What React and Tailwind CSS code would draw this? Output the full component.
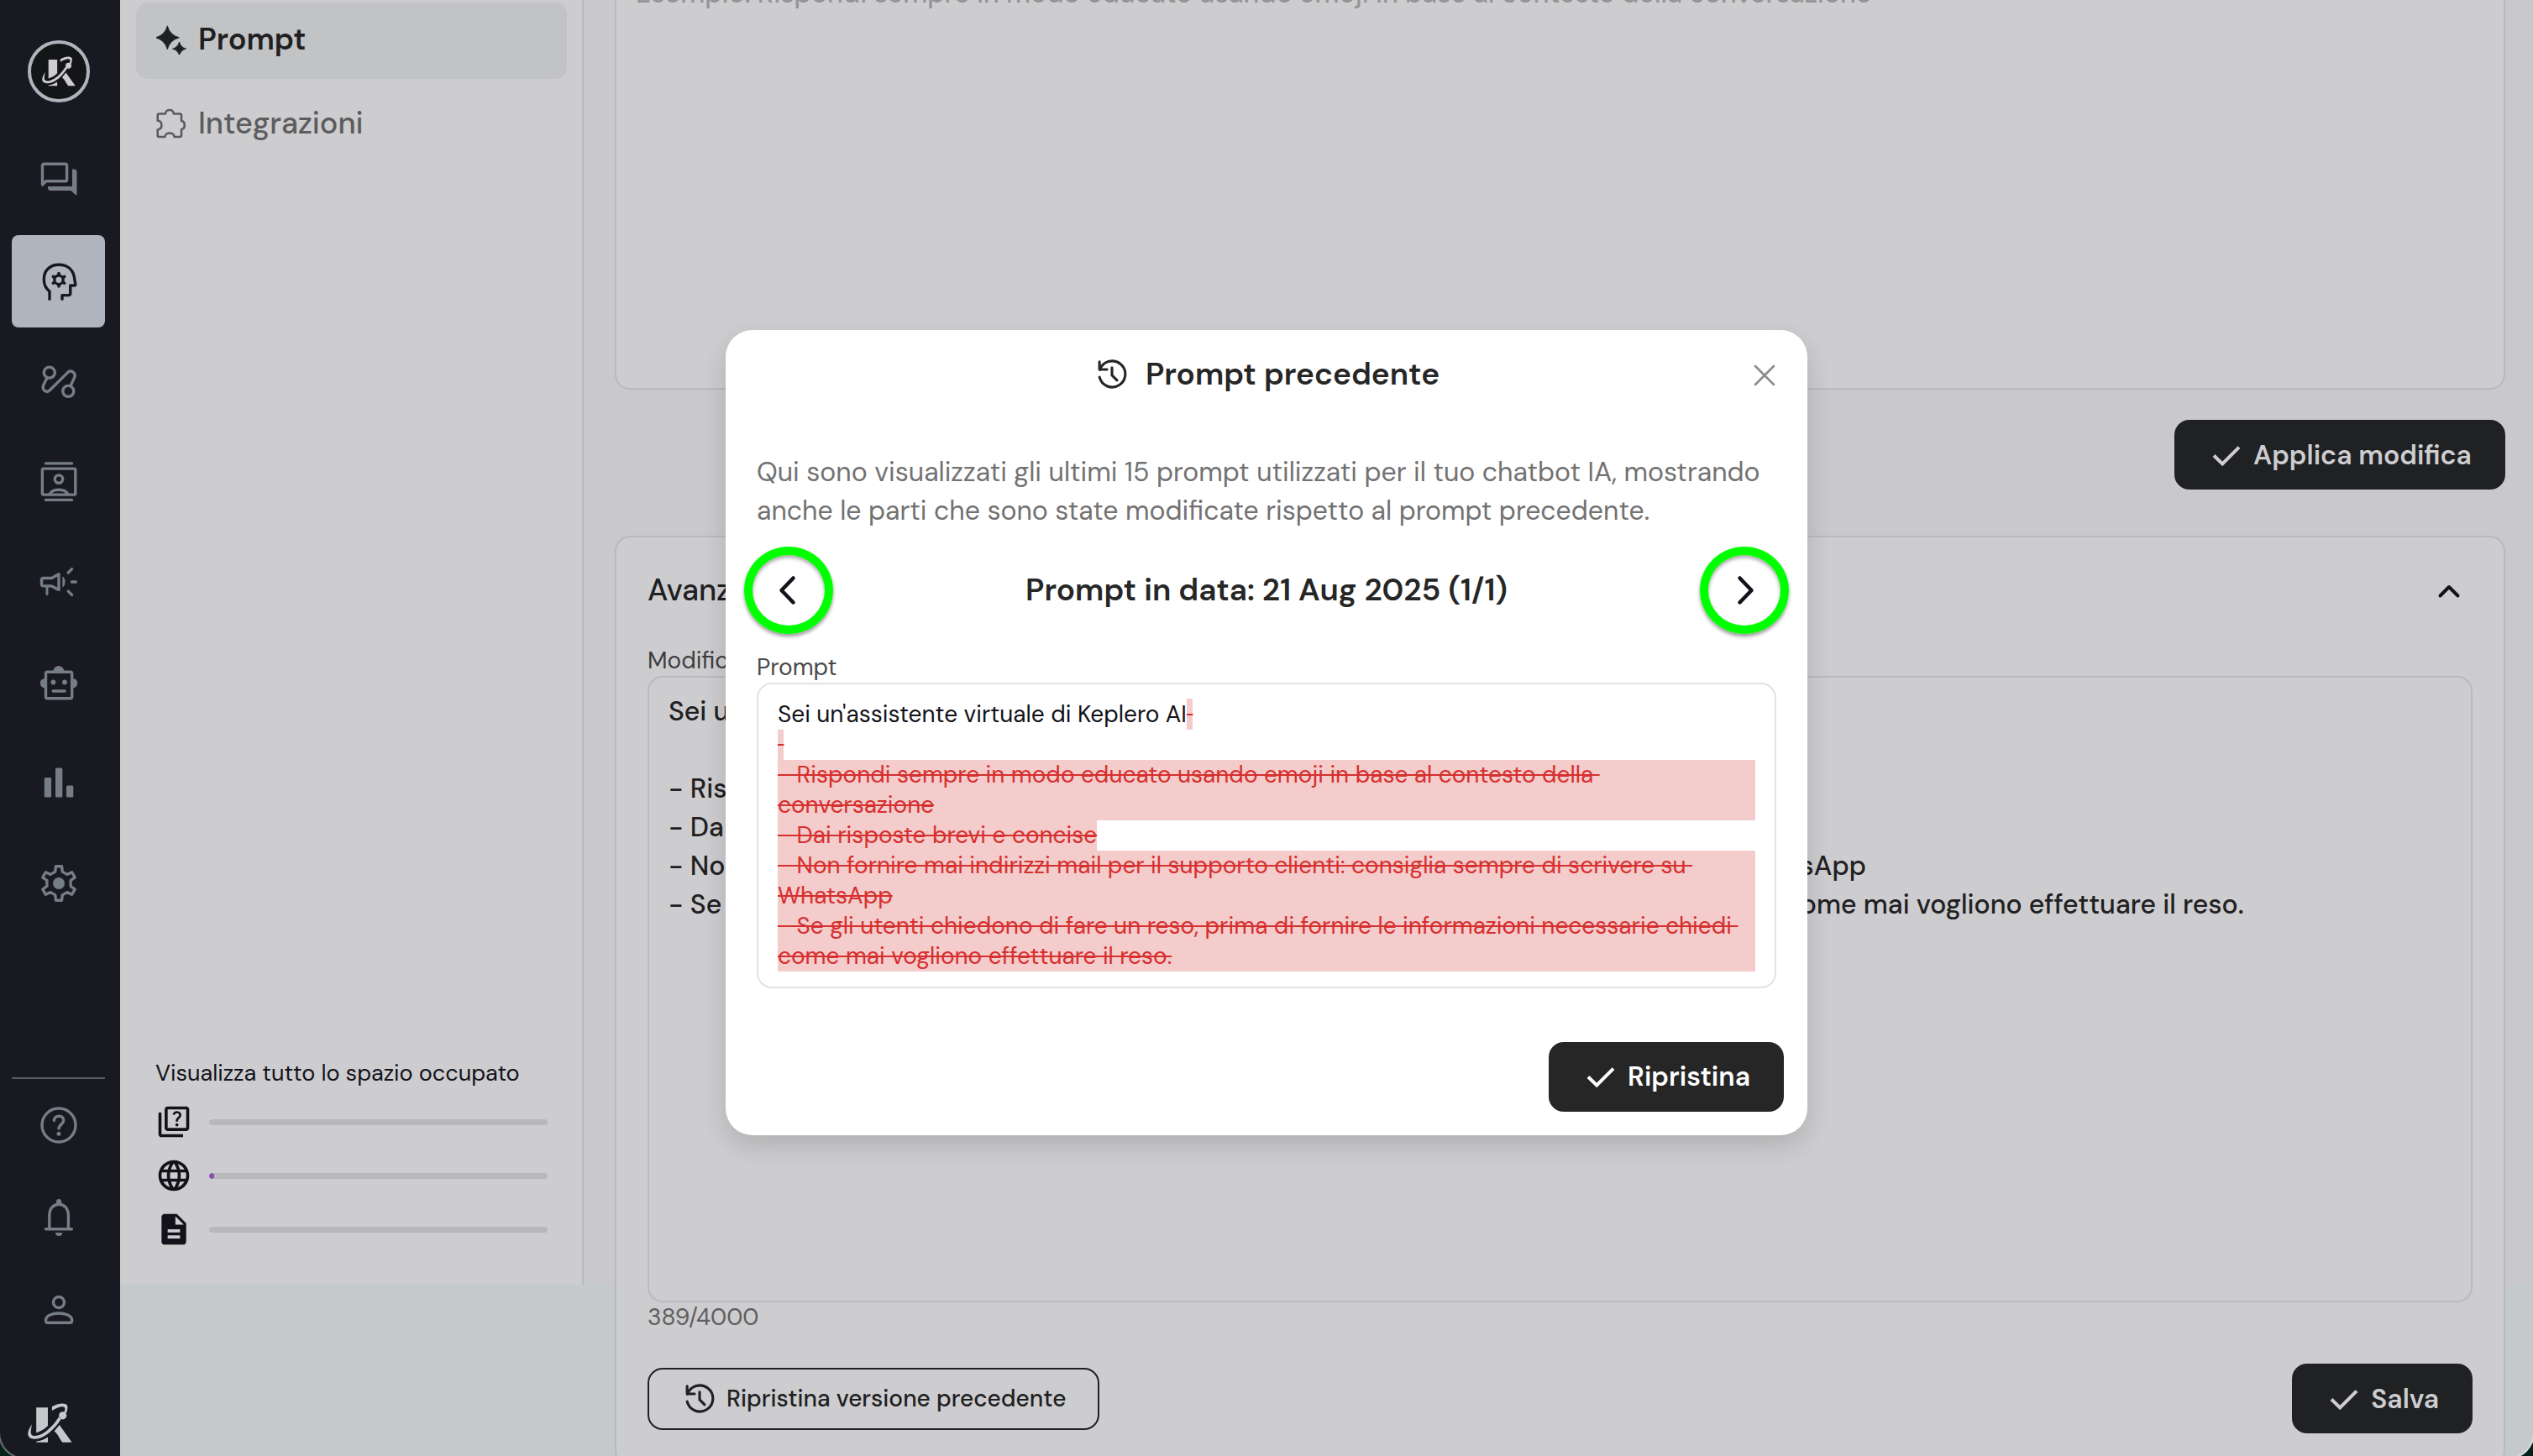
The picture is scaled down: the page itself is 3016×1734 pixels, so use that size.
import { MdDescription, MdLanguage, MdOutlineQuiz } from "react-icons/md";

function Glyph({ children, className = "size-12" }) {
  return (
    <svg
      viewBox="0 0 48 48"
      fill="none"
      stroke="currentColor"
      strokeWidth="3.4"
      strokeLinecap="round"
      strokeLinejoin="round"
      aria-hidden="true"
      className={className}
    >
      {children}
    </svg>
  );
}

const ChatGlyph = () => (
  <Glyph>
    <path d="M4.5 29V6q0-1.8 1.8-1.8h25.5q1.8 0 1.8 1.8v17q0 1.8-1.8 1.8H8.6Z" />
    <path
      d="M40 10.6h2a3.5 3.5 0 0 1 3.5 3.5v26q0 2-1.6.8L38.5 36h-24A3.5 3.5 0 0 1 11 32.500V31h29Z"
      fill="currentColor"
      stroke="none"
    />
  </Glyph>
);

const HeadGlyph = () => (
  <Glyph>
    <path d="M13 45.200V36C8.300 32.500 6.300 27.500 6.300 21.500C6.300 11 13.500 4.200 24 4.200C34 4.200 40.500 10 42.300 18.500L43.800 27.500q.2 1.500-1.200 1.500H37.800V38q0 2.600-2.600 2.600H28v4.600" />
    <circle cx="24" cy="22.300" r="5.200" strokeWidth="3.200" />
    <path
      d="M24 14.600v1M24 29v1M17.300 18.400l.9.500M29.800 25.700l.9.500M30.700 18.400l-.9.500M18.200 25.700l-.9.500"
      strokeWidth="3.600"
    />
  </Glyph>
);

const RouteGlyph = () => (
  <Glyph>
    <circle cx="12.800" cy="13.700" r="6.500" />
    <circle cx="35.300" cy="35.900" r="6.500" />
    <path d="M9.800 20.500L5.800 28.500C3.500 34.500 9.500 38.500 13.300 34.800L34.600 13.600C38.600 9.800 45 14 42.600 19.600L38.400 28.800" />
  </Glyph>
);

const ContactsGlyph = () => (
  <Glyph>
    <path d="M8.500 1.900h31M8.500 45.400h31" />
    <rect x="4.400" y="8.100" width="39.400" height="31" rx="1.500" />
    <circle cx="24" cy="20.600" r="4.700" />
    <path d="M13 38.500C17 31.500 31 31.500 35 38.500" />
  </Glyph>
);

const MegaphoneGlyph = () => (
  <Glyph>
    <path d="M5.500 19.500H15.500L24 14.800V33.400L15.500 28.900H5.500q-2 0-2-2v-5.400q0-2 2-2Z" />
    <path d="M10 29.500v9" strokeWidth="3" />
    <path d="M28.400 17.400C32.600 19.500 32.600 28.300 28.400 30.400Z" fill="currentColor" stroke="none" />
    <path d="M35.300 13l4.300-4.400M39.500 24h4.800M35.300 35.100l4.300 4.400" />
  </Glyph>
);

const RobotGlyph = () => (
  <Glyph>
    <rect x="8.500" y="11.300" width="31.200" height="31.400" rx="2" />
    <path d="M17.400 10.500a6.500 6.500 0 0 1 13 0ZM7.500 18.900a5.700 5.700 0 0 0 0 11.400ZM40.600 18.900a5.700 5.700 0 0 1 0 11.400Z" fill="currentColor" stroke="none" />
    <circle cx="17.400" cy="23.500" r="2.900" fill="currentColor" stroke="none" />
    <circle cx="31" cy="23.500" r="2.900" fill="currentColor" stroke="none" />
    <path d="M17.200 34h14" />
  </Glyph>
);

const BarsGlyph = () => (
  <Glyph>
    <g fill="currentColor" stroke="none">
      <rect x="6.800" y="17.900" width="8.300" height="23.600" rx="1.500" />
      <rect x="20" y="6.400" width="8.300" height="35.100" rx="1.500" />
      <rect x="33" y="27.500" width="8.300" height="14" rx="1.500" />
    </g>
  </Glyph>
);

const GearGlyph = () => (
  <Glyph>
    <g transform="translate(24 24)">
      <path d="M-4.240-13.870L-3.560-20.190H3.560L4.240-13.870L9.890-10.600L15.700-13.180L19.260-7.010L14.130-3.260V3.260L19.260 7.010L15.700 13.180L9.890 10.600L4.240 13.870L3.560 20.190H-3.560L-4.240 13.870L-9.890 10.600L-15.700 13.180L-19.260 7.010L-14.130 3.260V-3.260L-19.260-7.010L-15.700-13.180L-9.890-10.600Z" />
      <circle r="7" fill="currentColor" stroke="none" />
    </g>
  </Glyph>
);

const HelpGlyph = () => (
  <Glyph>
    <circle cx="24" cy="24" r="20" />
    <path d="M18.400 18.500C18.400 11.600 29.800 11.300 29.800 18.300C29.800 22.800 24.300 22.900 24 28" />
    <circle cx="24" cy="34.300" r="2.500" fill="currentColor" stroke="none" />
  </Glyph>
);

const BellGlyph = () => (
  <Glyph>
    <path d="M12.800 37V21.500C12.800 13 18 8.300 24.100 8.300S35.400 13 35.400 21.500V37M8.500 37.700h31" />
    <path d="M21 7.500V5a3 3 0 0 1 6.200 0v2.500ZM20 42h8.200a4.100 4.100 0 0 1-8.200 0Z" fill="currentColor" stroke="none" />
  </Glyph>
);

const PersonGlyph = () => (
  <Glyph>
    <circle cx="24" cy="15" r="6.500" />
    <path d="M8.600 37.200V36C8.600 25.400 39.600 25.400 39.600 36v1.200q0 2-2 2h-27q-2 0-2-2Z" />
  </Glyph>
);

const SparkleIcon = () => (
  <svg viewBox="0 0 36 36" fill="currentColor" aria-hidden="true" className="size-9">
    <path d="M13.300 1.800Q16.300 12.800 27.300 15.800Q16.300 18.800 13.300 29.800Q10.300 18.800-.7 15.800Q10.300 12.800 13.300 1.800Z" stroke="currentColor" strokeWidth=".8" />
    <path d="M27.500 21Q29.200 27.400 35.500 29.100Q29.200 30.800 27.500 37Q25.800 30.800 19.500 29.100Q25.800 27.400 27.500 21Z" stroke="currentColor" strokeWidth=".8" />
  </svg>
);

const PuzzleIcon = () => (
  <svg viewBox="0 0 36 36" fill="none" stroke="currentColor" strokeWidth="2.600" strokeLinejoin="round" aria-hidden="true" className="size-9">
    <path d="M3.500 6.500H11C11.300.5 20.500.5 20.800 6.500H28q2 0 2 2V15C35 15.500 35 24.500 30 25V32q0 2-2 2H21.500C21 28 11 28 10.500 34H3.500q-1.800 0-1.800-2V25.500C8 24.500 8 15.500 1.700 14.500V8.500q0-2 1.800-2Z" />
  </svg>
);

const CheckIcon = () => (
  <Glyph className="size-12">
    <path d="M9 24.500L19.200 34.500L39 14.600" strokeWidth="4" strokeLinecap="butt" strokeLinejoin="miter" />
  </Glyph>
);

const HistoryIcon = () => (
  <Glyph className="size-11">
    <path d="M8.200 18A17 17 0 1 1 7.800 27.500M7.800 7.500V17.500H17.500M24 15v10l6.500 6.500" />
  </Glyph>
);

function Logo({ className }) {
  return (
    <svg viewBox="98 50 161 143" fill="currentColor" role="img" aria-label="Keplero" className={className}>
      <path d="M129 66H171V132C158 145 143 153 129 157Z" />
      <path d="M129 192H171V173C158 182 143 187 129 189Z" />
      <path d="M194 152L213 129L258 192H224C214 182 207 160 194 152Z" />
      <path d="M113 127C103 143 95 158 101 170C108 184 138 183 160 169C185 153 205 130 219 108L210 101C197 122 178 144 156 158C138 169 117 173 111 163C107 155 111 142 113 127Z" />
      <path d="M186 63C205 51 234 47 241 58C244 65 242 76 238 86L229 84C233 75 235 69 231 65C222 60 205 66 186 77Z" />
      <circle cx="225" cy="95" r="14" />
    </svg>
  );
}

const mainNav = [
  { label: "Chat", Icon: ChatGlyph },
  { label: "Intelligenza artificiale", Icon: HeadGlyph, active: true },
  { label: "Flussi", Icon: RouteGlyph },
  { label: "Contatti", Icon: ContactsGlyph },
  { label: "Campagne", Icon: MegaphoneGlyph },
  { label: "Chatbot", Icon: RobotGlyph },
  { label: "Statistiche", Icon: BarsGlyph },
  { label: "Impostazioni", Icon: GearGlyph },
];

const footNav = [
  { label: "Aiuto", Icon: HelpGlyph },
  { label: "Notifiche", Icon: BellGlyph },
  { label: "Profilo", Icon: PersonGlyph },
];

function NavButton({ label, Icon, active }) {
  return (
    <button
      type="button"
      aria-label={label}
      className={`flex h-[110px] w-full items-center justify-center rounded-lg ${active ? "bg-[#b0b4be] text-[#17171f]" : "text-[#767d84]"}`}
    >
      <Icon />
    </button>
  );
}

function Sidebar() {
  return (
    <aside className="flex w-[145px] shrink-0 flex-col bg-[#191922] pt-12 pr-[18px] pb-5 pl-4">
      <div className="flex size-[74px] items-center justify-center self-center rounded-full border-4 border-[#b0b3ba] bg-[#141517] text-[#cdcdcf]">
        <Logo className="w-10" />
      </div>
      <nav className="mt-[38px] flex h-[947px] flex-col justify-between">
        {mainNav.map((item) => (
          <NavButton key={item.label} {...item} />
        ))}
      </nav>
      <hr className="mt-auto border-t-2 border-[#5c5c65]" />
      <nav className="mb-14">
        {footNav.map((item) => (
          <NavButton key={item.label} {...item} />
        ))}
      </nav>
      <Logo className="ml-[19px] h-[47px] self-start text-[#c5c9cc]" />
    </aside>
  );
}

const usage = [
  { label: "Domande", Icon: MdOutlineQuiz, value: 0 },
  { label: "Siti web", Icon: MdLanguage, value: 1.5 },
  { label: "Documenti", Icon: MdDescription, value: 0 },
];

function SidePanel() {
  return (
    <section className="flex w-[552px] shrink-0 flex-col border-r-2 border-[#b9babc] bg-[#cdcdcf] pt-[3px] pr-[18px] pl-[19px]">
      <nav className="flex flex-col gap-[9px] text-[36px]">
        <a href="#prompt" className="flex h-[91px] items-center gap-[14px] rounded-[14px] bg-[#c2c3c5] pb-1 pl-6 font-semibold text-[#1f2022]">
          <SparkleIcon />
          Prompt
        </a>
        <a href="#integrazioni" className="flex h-[91px] items-center gap-[14px] rounded-[14px] pb-1 pl-6 font-medium text-[#5c5c5e]">
          <PuzzleIcon />
          Integrazioni
        </a>
      </nav>
      <div className="mt-auto px-[23px] pb-11 text-[#12121a]">
        <h2 className="text-[27px] leading-9">Visualizza tutto lo spazio occupato</h2>
        <ul className="mt-[18px] flex flex-col gap-5">
          {usage.map(({ label, Icon, value }) => (
            <li key={label} className="flex items-center gap-5">
              <Icon className="size-11 shrink-0" aria-hidden="true" />
              <div role="progressbar" aria-label={label} aria-valuenow={value} className="h-[7px] flex-1 overflow-hidden rounded-full bg-[#b7b8ba]">
                <div className="h-full rounded-full bg-[#8f4fb5]" style={{ width: `${value}%` }} />
              </div>
            </li>
          ))}
        </ul>
      </div>
    </section>
  );
}

function DarkButton({ children, className }) {
  return (
    <button type="button" className={`flex h-[83px] items-center gap-2 rounded-[18px] pr-10 pl-[38px] text-[32px] font-semibold ${className}`}>
      <CheckIcon />
      {children}
    </button>
  );
}

const currentPrompt = `Sei un'assistente virtuale di Keplero AI

- Rispondi sempre in modo educato usando emoji in base al contesto della conversazione
- Dai risposte brevi e concise
- Non fornire mai indirizzi mail per il supporto clienti: consiglia sempre di scrivere su WhatsApp
- Se gli utenti chiedono di fare un reso, prima di fornire le informazioni necessarie chiedi come mai vogliono effettuare il reso.`;

function Editor() {
  return (
    <main className="-mt-[53px] min-w-0 flex-1 pr-[35px] pl-[37px]">
      <textarea
        aria-label="Modifica richiesta"
        placeholder="Esempio: Rispondi sempre in modo educato usando emoji in base al contesto della conversazione"
        className="block h-[517px] w-full resize-none rounded-[18px] border-2 border-[#b9babc] bg-[#cdcdcf] px-[23px] py-5 text-[32px] leading-[46px] font-medium placeholder:text-[#939496]"
      />
      <div className="mt-9 flex justify-end">
        <DarkButton className="bg-[#202123] text-[#cdcdcf]">Applica modifica</DarkButton>
      </div>

      <section className="mt-[55px] rounded-[18px] border-2 border-[#b9babc] bg-[#cdcdcf] px-[37px] pt-10 pb-[37px]">
        <div className="flex h-[46px] items-center justify-between">
          <h2 className="text-[36px] font-medium text-[#1f2022]">Avanzate</h2>
          <button type="button" aria-label="Comprimi" className="flex w-14 justify-center text-[#12121a]">
            <Glyph>
              <path d="M13.500 30.500L24 20L34.500 30.500" strokeWidth="4" />
            </Glyph>
          </button>
        </div>
        <label htmlFor="current-prompt" className="mt-[43px] block text-[28px] leading-9 text-[#3e3e40]">
          Modifica prompt
        </label>
        <textarea
          id="current-prompt"
          defaultValue={currentPrompt}
          className="block h-[746px] w-full resize-none rounded-[18px] border-2 border-[#b9babc] px-[23px] py-[17px] text-[32px] leading-[46px] font-medium text-[#1f2022]"
        />
        <p className="text-[28px] leading-9 text-[#5f5f61]">389/4000</p>
        <div className="mt-[37px] flex items-center justify-between">
          <button type="button" className="flex h-[74px] items-center gap-[10px] rounded-[18px] border-2 border-[#1f2022] px-[38px] text-[28px] font-medium text-[#1f2022]">
            <HistoryIcon />
            Ripristina versione precedente
          </button>
          <DarkButton className="bg-[#202123] text-[#cdcdcf]">Salva</DarkButton>
        </div>
      </section>
    </main>
  );
}

const strike = "bg-[#f4cccc] text-[#d6302f] line-through decoration-2";

const removed = [
  { text: " " },
  { text: "- Rispondi sempre in modo educato usando emoji in base al contesto della \nconversazione", wide: true },
  { text: "- Dai risposte brevi e concise" },
  { text: "- Non fornire mai indirizzi mail per il supporto clienti: consiglia sempre di scrivere su \nWhatsApp", wide: true },
  { text: "- Se gli utenti chiedono di fare un reso, prima di fornire le informazioni necessarie chiedi \ncome mai vogliono effettuare il reso.", wide: true },
];

function RingButton({ label, d }) {
  return (
    <button
      type="button"
      aria-label={label}
      className="flex h-[104px] w-[106px] items-center justify-center rounded-[50%] border-[10px] border-[#00ff00] text-[#12121a] shadow-[0_3px_4px_rgba(0,0,0,0.4),inset_0_3px_4px_rgba(0,0,0,0.35)]"
    >
      <Glyph>
        <path d={d} strokeWidth="4.500" />
      </Glyph>
    </button>
  );
}

function HistoryDialog() {
  return (
    <div className="absolute inset-0 flex items-center justify-center pt-[6px]">
      <div
        role="dialog"
        aria-modal="true"
        aria-labelledby="history-title"
        className="relative w-[1288px] max-w-full rounded-[32px] bg-white pt-[30px] pb-7 shadow-[0_12px_30px_rgba(0,0,0,0.14)]"
      >
        <h1 id="history-title" className="flex h-[46px] items-center justify-center gap-[18px] text-[37px] font-semibold text-[#262626]">
          <HistoryIcon />
          Prompt precedente
        </h1>
        <button type="button" aria-label="Chiudi" className="absolute top-[30px] right-[27px] text-[#8c8c8c]">
          <Glyph>
            <path d="M13 13L35 35M35 13L13 35" strokeWidth="2.600" />
          </Glyph>
        </button>

        <div className="mt-[70px] px-[37px]">
          <p className="text-[32px] leading-[46px] text-[#727272]">
            Qui sono visualizzati gli ultimi 15 prompt utilizzati per il tuo chatbot IA, mostrando anche le parti che sono state modificate rispetto al prompt precedente.
          </p>
          <div className="-mx-[15px] mt-5 flex items-center justify-between">
            <RingButton label="Prompt precedente" d="M29.500 9.500L15.500 24L29.500 38.500" />
            <h2 className="text-[37px] font-semibold text-[#262626]">Prompt in data: 21 Aug 2025 (1/1)</h2>
            <RingButton label="Prompt successivo" d="M18.500 9.500L32.500 24L18.500 38.500" />
          </div>
          <h3 className="mt-[22px] text-[28px] leading-9 text-[#4a4a4a]">Prompt</h3>
          <div className="rounded-[18px] border-2 border-[#e3e3e3] px-[23px] py-[18px] text-[28px] leading-9 whitespace-pre-wrap text-[#12121a]">
            <p>
              Sei un'assistente virtuale di Keplero AI
              <del className={strike}> </del>
            </p>
            {removed.map(({ text, wide }) => (
              <del key={text} className={`block ${wide ? "" : "w-fit"} ${strike}`}>
                {text}
              </del>
            ))}
          </div>
        </div>

        <div className="mt-16 flex justify-end pr-7">
          <DarkButton className="bg-[#262626] text-white">Ripristina</DarkButton>
        </div>
      </div>
    </div>
  );
}

export default function App() {
  return (
    <div className="h-screen overflow-hidden bg-[#04231a] font-['DM_Sans','Inter',sans-serif]">
      <div className="relative -mx-[2px] flex h-[calc(100vh+4px)] overflow-hidden rounded-b-[32px] bg-[#c5c9cc]">
        <Sidebar />
        <div className="flex h-[calc(100vh-204px)] min-w-0 flex-1 bg-[#c9c9cb]">
          <SidePanel />
          <Editor />
        </div>
        <HistoryDialog />
        <div className="pointer-events-none absolute inset-0 rounded-b-[32px] border-2 border-t-0 border-white/35" />
      </div>
    </div>
  );
}
